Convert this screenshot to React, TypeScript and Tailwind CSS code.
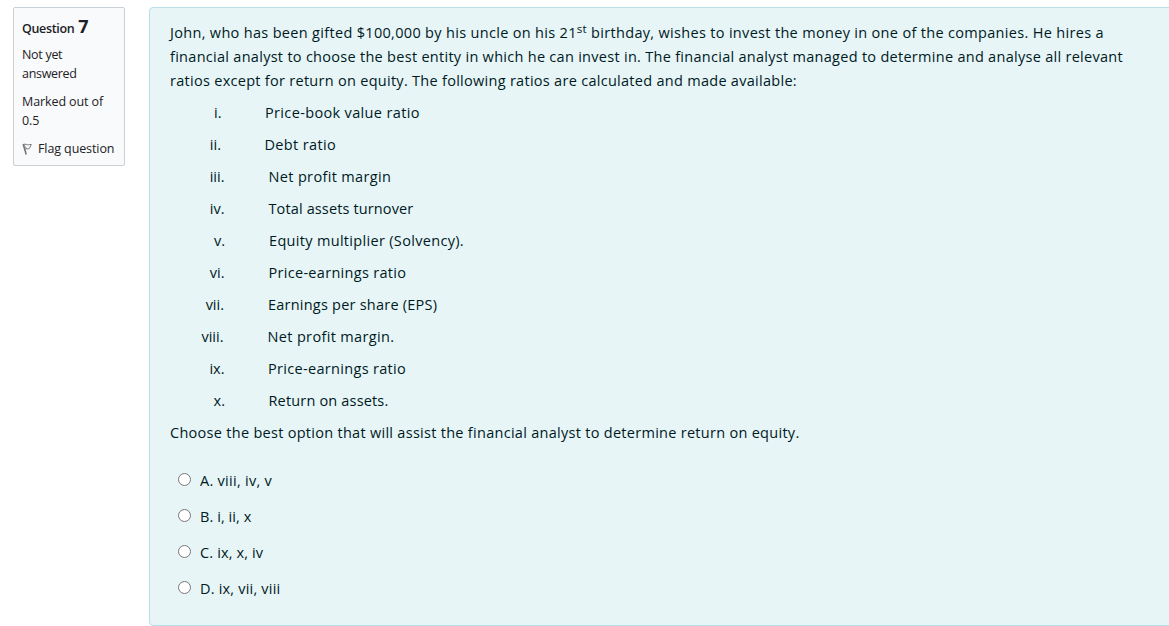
import { useState } from 'react';

const ratios = [
    { numeral: 'i.', label: 'Price-book value ratio', cell: 'w-[51.5px]', gap: 'gap-[43.5px]', text: 'tracking-[0.35px]' },
    { numeral: 'ii.', label: 'Debt ratio', cell: 'w-[51px]', gap: 'gap-[43.5px]', text: 'tracking-[0.35px]' },
    { numeral: 'iii.', label: 'Net profit margin', cell: 'w-[54.5px]', gap: 'gap-[44px]', text: 'tracking-[0.35px]' },
    { numeral: 'iv.', label: 'Total assets turnover', cell: 'w-[54.5px]', gap: 'gap-[44px]', text: 'tracking-[0.13px]' },
    { numeral: 'v.', label: 'Equity multiplier (Solvency).', cell: 'w-[55px]', gap: 'gap-[44px]', text: 'tracking-[0.32px]' },
    { numeral: 'vi.', label: 'Price-earnings ratio', cell: 'w-[54.5px]', gap: 'gap-[44px]', text: 'tracking-[0.3px]' },
    { numeral: 'vii.', label: 'Earnings per share (EPS)', cell: 'w-[54px]', gap: 'gap-[44px]', text: 'tracking-[0.23px]' },
    { numeral: 'viii.', label: 'Net profit margin.', cell: 'w-[53.5px]', gap: 'gap-[44px]', text: 'tracking-[0.35px]' },
    { numeral: 'ix.', label: 'Price-earnings ratio', cell: 'w-[54.5px]', gap: 'gap-[43.5px]', text: 'tracking-[0.32px]' },
    { numeral: 'x.', label: 'Return on assets.', cell: 'w-[55px]', gap: 'gap-[43.5px]', text: 'tracking-[0.17px]' },
];

const options = [
    { id: 'a', label: 'A. viii, iv, v', text: 'tracking-[0.28px]' },
    { id: 'b', label: 'B. i, ii, x', text: 'tracking-[0.08px]' },
    { id: 'c', label: 'C. ix, x, iv', text: 'tracking-[0.14px]' },
    { id: 'd', label: 'D. ix, vii, viii', text: 'tracking-[0.2px]' },
];

export default function App() {
    return (
        <main className="flex h-[626px] w-full items-start overflow-hidden bg-white pl-[13px] pt-[7px] font-['Open_Sans','Noto_Sans',sans-serif] text-[#1d2125]">
            <QuestionInfo />
            <QuestionBody />
        </main>
    );
}

function QuestionInfo() {
    return (
        <aside className="mr-6 h-[159px] w-28 shrink-0 rounded-xs border border-[#cad0d7] bg-[#f8fafc] pl-2 pt-1.5 text-[12.5px] leading-[19px] tracking-[-0.1px] whitespace-nowrap">
            <h3 className="flex h-6 items-baseline gap-1 text-[12.5px] leading-6 font-semibold tracking-[-0.35px]">
                <span>Question</span>
                <span className="text-[18px] font-bold">7</span>
            </h3>
            <div className="mt-[7px] tracking-[-0.3px]">Not yet<br />answered</div>
            <div className="mt-[9px]">Marked out of<br />0.5</div>
            <a href="#flag" className="mt-[9px] flex items-center gap-[5px]">
                <FlagIcon />
                <span>Flag question</span>
            </a>
        </aside>
    );
}

function QuestionBody() {
    const [answer, setAnswer] = useState('');

    return (
        <section className="h-[619px] w-[1030px] shrink-0 rounded border border-[#b8e0e6] bg-[#e7f5f7] pl-5 pt-[13px] text-[14.5px] leading-6 whitespace-nowrap text-[#001a1e]">
            <p className="tracking-[0.285px]">
                <span className="block tracking-[0.32px]">
                    John, who has been gifted $100,000 by his uncle on his 21<sup className="top-[-5px] text-[11.5px]">st</sup> birthday, wishes to invest the money in one of the companies. He hires a
                </span>
                <span className="block">
                    financial analyst to choose the best entity in which he can invest in. The financial analyst managed to determine and analyse all relevant
                </span>
                <span className="block">
                    ratios except for return on equity. The following ratios are calculated and made available:
                </span>
            </p>
            <ul className="mt-2 flex flex-col gap-2">
                {ratios.map((ratio) => (
                    <li key={ratio.numeral} className={`flex ${ratio.gap}`}>
                        <span className={`text-right ${ratio.cell}`}>{ratio.numeral}</span>
                        <span className={ratio.text}>{ratio.label}</span>
                    </li>
                ))}
            </ul>
            <p className="mt-2 tracking-[0.285px]">
                Choose the best option that will assist the financial analyst to determine return on equity.
            </p>
            <div className="mt-6 flex flex-col gap-3 pl-2">
                {options.map((option) => (
                    <label key={option.id} className="flex items-center gap-[9px]">
                        <input
                            type="radio"
                            name="answer"
                            className="mb-[3px] size-[13px]"
                            checked={answer === option.id}
                            onChange={() => setAnswer(option.id)}
                        />
                        <span className={option.text}>{option.label}</span>
                    </label>
                ))}
            </div>
        </section>
    );
}

function FlagIcon() {
    return (
        <svg width="11" height="12" viewBox="0 0 11 12" fill="none" stroke="#777">
            <path d="M1.200 1l3 10.500" strokeWidth="1.6" />
            <path d="M2.200 2.200l2.600 3.600" strokeWidth="0.8" />
            <path d="M1.500 1.500c2-1 3.500.6 5 .3.900-.2 1.500-.5 2.800-.3L7.300 5.500c-1.500.9-2.500-.3-4.300.7" />
        </svg>
    );
}
